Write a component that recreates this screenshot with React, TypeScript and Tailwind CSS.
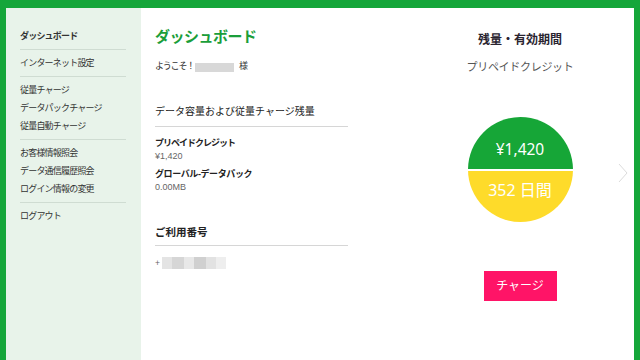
const jp = { fontFamily: '"Liberation Sans", "Noto Sans CJK JP", sans-serif' };

const groups: string[][] = [
  ['ダッシュボード'],
  ['インターネット設定'],
  ['従量チャージ', 'データパックチャージ', '従量自動チャージ'],
  ['お客様情報照会', 'データ通信履歴照会', 'ログイン情報の変更'],
  ['ログアウト'],
];

function Sidebar() {
  return (
    <aside className="w-[135px] shrink-0 bg-[#e8f3ea] pl-[14px] pr-[15px] pt-[19px]">
      {groups.map((items, gi) => (
        <div
          key={gi}
          className={
            'pb-[4px] ' +
            (gi === 0 ? '' : 'pt-[4px] ') +
            (gi < groups.length - 1 ? 'border-b border-[#cfdcd2]' : '')
          }
        >
          {items.map((label) => (
            <div
              key={label}
              className={
                'h-[18px] leading-[18px] text-[9px] tracking-[-0.8px] text-[#333] whitespace-nowrap ' +
                (label === 'ダッシュボード' ? 'font-bold text-[#222]' : '')
              }
            >
              {label}
            </div>
          ))}
        </div>
      ))}
    </aside>
  );
}

function Blur({ className }: { className: string }) {
  return <span className={'inline-block ' + className} />;
}

export default function App() {
  return (
    <div className="w-[640px] h-[360px] bg-[#15a63a] pt-[8px] pl-[6px] pr-[6px] flex" style={jp}>
      <div className="flex-1 flex bg-white">
        <Sidebar />

        {/* Left column */}
        <section className="w-[299px] shrink-0 pl-[14px] pt-[19px]">
          <div className="w-[193px]">
            <h1 className="text-[15px] leading-[20px] font-bold text-[#1a9e3a] tracking-[-0.5px]">
              ダッシュボード
            </h1>

            <p className="mt-[13px] h-[14px] flex items-center text-[9px] text-[#333]">
              <span className="tracking-[-1.2px]">ようこそ！</span>
              <Blur className="ml-[1px] w-[39px] h-[9px] bg-[#d8d8d8]" />
              <span className="ml-[5px]">様</span>
            </p>

            <h2 className="mt-[30px] pb-[6px] text-[10px] leading-[16px] text-[#222] border-b border-[#d6d6d6]">
              データ容量および従量チャージ残量
            </h2>

            <div className="mt-[10px] text-[9px] leading-[13px]">
              <div className="font-bold text-[#222] tracking-[-1px]">プリペイドクレジット</div>
              <div className="text-[#666]">¥1,420</div>
              <div className="mt-[5px] font-bold text-[#222] tracking-[-0.4px]">グローバル-データパック</div>
              <div className="text-[#666]">0.00MB</div>
            </div>

            <h2 className="mt-[30px] pb-[5px] text-[10.5px] leading-[16px] font-bold text-[#222] border-b border-[#d6d6d6]">
              ご利用番号
            </h2>

            <div className="mt-[10px] h-[14px] flex items-center text-[8.5px] text-[#666]">
              <span>+</span>
              <span className="ml-[2px] flex h-[12px]">
                <Blur className="w-[10px] h-[12px] bg-[#e4e4e4]" />
                <Blur className="w-[12px] h-[12px] bg-[#d6d6d6]" />
                <Blur className="w-[10px] h-[12px] bg-[#e8e8e8]" />
                <Blur className="w-[12px] h-[12px] bg-[#d0d0d0]" />
                <Blur className="w-[10px] h-[12px] bg-[#e2e2e2]" />
                <Blur className="w-[10px] h-[12px] bg-[#eeeeee]" />
              </span>
            </div>
          </div>
        </section>

        {/* Right panel */}
        <section className="w-[160px] shrink-0 flex flex-col items-center pt-[24px]">
          <div className="text-[12px] leading-[16px] font-bold text-[#2a2430]">残量・有効期間</div>
          <div className="mt-[11px] text-[11px] leading-[16px] text-[#555] tracking-[-0.3px]">
            プリペイドクレジット
          </div>

          <div
            className="mt-[42px] w-[105px] h-[105px] rounded-full overflow-hidden flex flex-col bg-white"
            style={{ fontFamily: '"Noto Sans", "Noto Sans CJK JP", sans-serif' }}
          >
            <div className="h-[52px] bg-[#16a637] text-white text-[15.5px] leading-[22px] text-center pt-[21px]">
              ¥1,420
            </div>
            <div className="mt-[2px] flex-1 bg-[#fedb2a] text-white text-[16px] leading-[22px] text-center pt-[8px]">
              352 日間
            </div>
          </div>

          <button className="mt-[49px] w-[73px] h-[30px] bg-[#ff1467] text-white text-[12px]">
            チャージ
          </button>
        </section>

        <div className="flex-1 flex items-start justify-end pr-[5px] pt-[154px]">
          <svg width="12" height="22" viewBox="0 0 12 22" fill="none">
            <polyline points="2,2 10,11 2,20" stroke="#dcdcdc" strokeWidth="1" />
          </svg>
        </div>
      </div>
    </div>
  );
}
